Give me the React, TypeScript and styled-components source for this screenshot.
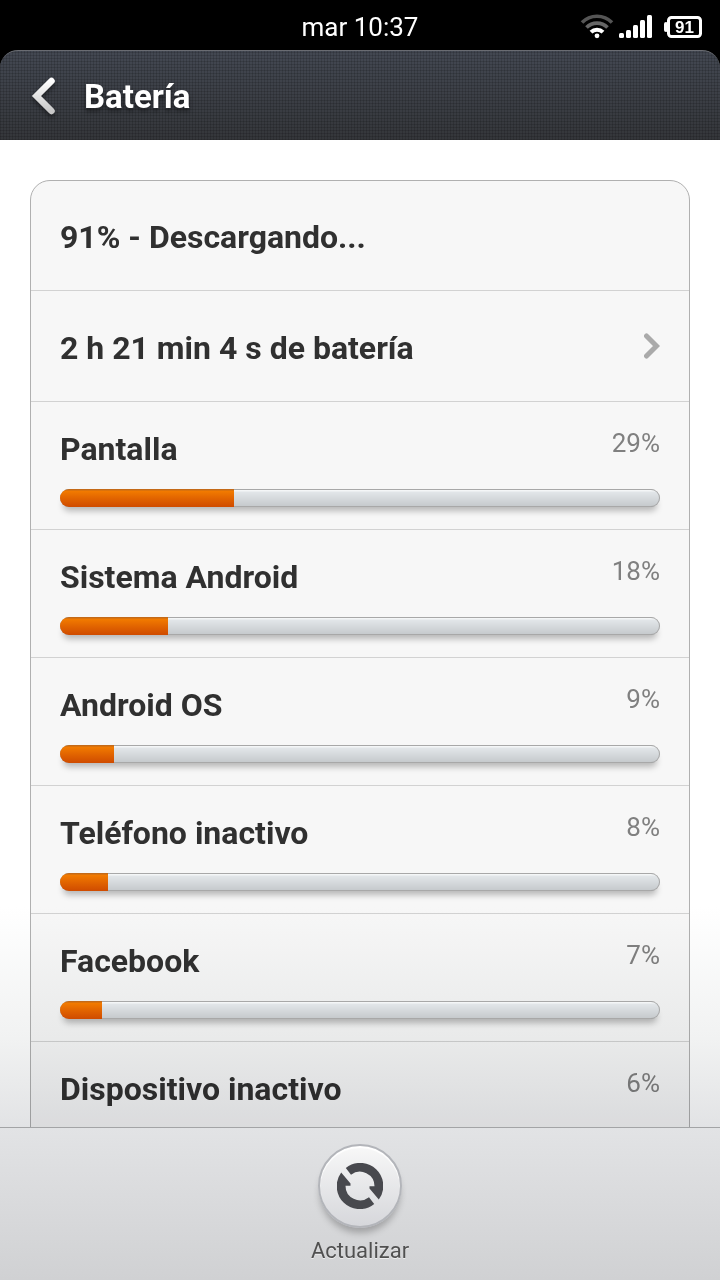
import React from "react";
import styled, { createGlobalStyle } from "styled-components";

const GlobalStyle = createGlobalStyle`
  *, *::before, *::after { box-sizing: border-box; }
  body {
    margin: 0;
    background: #000;
    font-family: Roboto, "Noto Sans", sans-serif;
    color: #303030;
  }
  h1, h2, p, ul { margin: 0; padding: 0; }
`;

const Screen = styled.div`
  display: flex;
  flex-direction: column;
  height: 100vh;
  overflow: hidden;
`;

const StatusBar = styled.div`
  display: grid;
  grid-template-columns: 1fr auto 1fr;
  align-items: center;
  flex: none;
  height: 50px;
  padding: 4px 16px 0;
  background: #000;
  color: #fff;
`;

const Clock = styled.time`
  grid-column: 2;
  font-size: 26px;
  line-height: 32px;
`;

const StatusIcons = styled.div`
  display: flex;
  justify-content: flex-end;
`;

const Header = styled.header`
  display: flex;
  align-items: center;
  flex: none;
  gap: 28px;
  height: 90px;
  padding: 2px 30px 0;
  border-top: 1px solid #6a6c72;
  border-radius: 18px 18px 0 0;
  background:
    repeating-linear-gradient(90deg, rgba(0, 0, 0, 0.14) 0 1px, transparent 1px 3px),
    repeating-linear-gradient(0deg, rgba(0, 0, 0, 0.14) 0 1px, transparent 1px 3px),
    linear-gradient(#434852, #34363a);
`;

const BackButton = styled.button`
  display: flex;
  padding: 0;
  border: 0;
  background: none;
  filter: drop-shadow(0 3px 2px rgba(0, 0, 0, 0.4));
`;

const Title = styled.h1`
  color: #fff;
  font-size: 33px;
  font-weight: 700;
  line-height: 40px;
  text-shadow: 0 3px 4px rgba(0, 0, 0, 0.5);
`;

const Content = styled.main`
  position: relative;
  flex: 1;
  min-height: 0;
  overflow: hidden;
  padding: 40px 30px 0;
  background: #fff;

  &::after {
    content: "";
    position: absolute;
    inset: auto 0 0;
    height: 220px;
    background: linear-gradient(#fff, #f1f2f2 60%, #e2e3e5);
    mix-blend-mode: multiply;
    pointer-events: none;
  }
`;

const Card = styled.div`
  border: 1px solid #b0b0b0;
  border-radius: 20px;
  background: #f7f7f7;
`;

const RowTitle = styled.h2`
  font-size: 32px;
  font-weight: 700;
  line-height: 42px;
`;

const SummaryRow = styled.div`
  display: flex;
  align-items: center;
  justify-content: space-between;
  height: 110px;
  padding: 2px 29px 0;
  border-bottom: 1px solid #d2d2d2;
`;

const DetailRow = styled.button`
  display: flex;
  align-items: center;
  justify-content: space-between;
  width: 100%;
  height: 111px;
  padding: 4px 29px 0;
  border: 0;
  border-bottom: 1px solid #d2d2d2;
  background: none;
  color: inherit;
  font: inherit;
  text-align: left;
`;

const UsageList = styled.ul`
  list-style: none;
`;

const UsageRow = styled.li`
  height: 128px;
  padding: 26px 29px 0;
  border-bottom: 1px solid #d2d2d2;

  &:last-child {
    border-bottom: 0;
  }
`;

const UsageHead = styled.div`
  display: flex;
  align-items: flex-start;
  justify-content: space-between;
  height: 61px;
`;

const Percent = styled.span`
  color: #808080;
  font-size: 26px;
  line-height: 30px;
`;

/* Sits above the fade at the foot of the list so the bars keep full colour. */
const TrackShadow = styled.div`
  position: relative;
  z-index: 1;
  border-radius: 9px;
  box-shadow: 0 7px 6px -3px rgba(0, 0, 0, 0.26);
`;

const Track = styled.div`
  height: 18px;
  overflow: hidden;
  border-radius: 9px;
  background: linear-gradient(#b0b0b0 0 1px, #f4f6f7 1px 2px, #e2e6e9 3px, #c6cacd 17px, #8e9092 17px);
  box-shadow: inset 0 0 0 1px #a8a8a8;
`;

const Fill = styled.div`
  height: 100%;
  background: linear-gradient(#c46a18 0 1px, #f27b00 2px, #e06200 10px, #cf4b00);
`;

const Toolbar = styled.footer`
  display: flex;
  justify-content: center;
  align-items: flex-start;
  flex: none;
  height: 153px;
  padding-top: 16px;
  border-top: 1px solid #a3a4a6;
  background: linear-gradient(#e2e3e5, #d0d1d3);
`;

const RefreshButton = styled.button`
  display: flex;
  flex-direction: column;
  align-items: center;
  gap: 9px;
  padding: 0;
  border: 0;
  background: none;
  color: #505050;
  font: inherit;
  font-size: 22px;
  line-height: 28px;
  text-shadow: 0 1px 0 rgba(255, 255, 255, 0.6);
`;

const Disc = styled.span`
  display: flex;
  align-items: center;
  justify-content: center;
  width: 84px;
  height: 84px;
  border: 2px solid #b3b5ba;
  border-radius: 50%;
  background: linear-gradient(#f8f8f8, #d6d7db);
  box-shadow: inset 0 2px 1px #fff, 0 7px 7px -2px rgba(0, 0, 0, 0.25);
`;

const usage = [
  { name: "Pantalla", percent: 29 },
  { name: "Sistema Android", percent: 18 },
  { name: "Android OS", percent: 9 },
  { name: "Teléfono inactivo", percent: 8 },
  { name: "Facebook", percent: 7 },
  { name: "Dispositivo inactivo", percent: 6 },
];

function StatusGlyphs() {
  return (
    <svg width="124" height="28" viewBox="580 13 124 28" fill="none" aria-hidden="true">
      <g strokeWidth="3.6">
        <path d="M582 22.500A21 21 0 0 1 612 22.500" stroke="#555" />
        <path d="M586.500 27.600A14.500 14.500 0 0 1 607.500 27.600" stroke="#666" />
        <path d="M591 32.200A8.500 8.500 0 0 1 603 32.200" stroke="#fff" strokeWidth="4" />
      </g>
      <circle cx="597" cy="35.800" r="2.400" fill="#fff" />
      <g fill="#fff">
        <rect x="619" y="33" width="5" height="5" rx="1.500" />
        <rect x="626" y="30" width="5" height="8" rx="1.500" />
        <rect x="633" y="25" width="5" height="13" rx="1.500" />
        <rect x="640" y="20" width="5" height="18" rx="1.500" />
        <rect x="647" y="15" width="5" height="23" rx="1.500" />
        <rect x="664" y="22" width="4" height="10" rx="2" />
      </g>
      <rect x="668.500" y="17.500" width="32" height="19" rx="3" stroke="#fff" strokeWidth="3" />
      <text x="684.500" y="33" fill="#fff" fontSize="17" fontWeight="700" textAnchor="middle" fontFamily="Liberation Sans, Arial, sans-serif">91</text>
    </svg>
  );
}

function BackIcon() {
  return (
    <svg width="26" height="40" viewBox="0 0 26 40" fill="none" aria-hidden="true">
      <defs>
        <linearGradient id="backTone" x1="0" y1="0" x2="0" y2="1">
          <stop offset="0" stopColor="#fff" />
          <stop offset="1" stopColor="#c8c8c8" />
        </linearGradient>
      </defs>
      <path d="M21.500 4L6.500 19L21.500 34" stroke="url(#backTone)" strokeWidth="6.500" strokeLinecap="round" />
    </svg>
  );
}

function ChevronIcon() {
  return (
    <svg width="16" height="30" viewBox="0 0 16 30" fill="none" aria-hidden="true">
      <path d="M2.500 3L12.500 13L2.500 23" stroke="#aaa" strokeWidth="5" strokeLinecap="round" />
    </svg>
  );
}

function RefreshIcon() {
  return (
    <svg width="46" height="46" viewBox="0 0 46 46" fill="#48494e" aria-hidden="true">
      <path d="M8.800 5A23 23 0 0 1 41.800 36.500L32.500 25.500V23.300H37.500A14.600 14.600 0 0 0 14 11.700Z" />
      <path d="M8.800 5A23 23 0 0 1 41.800 36.500L32.500 25.500V23.300H37.500A14.600 14.600 0 0 0 14 11.700Z" transform="rotate(180 23 23)" />
    </svg>
  );
}

export default function App() {
  return (
    <>
      <GlobalStyle />
      <Screen>
        <StatusBar>
          <Clock>mar 10:37</Clock>
          <StatusIcons>
            <StatusGlyphs />
          </StatusIcons>
        </StatusBar>
        <Header>
          <BackButton aria-label="Atrás">
            <BackIcon />
          </BackButton>
          <Title>Batería</Title>
        </Header>
        <Content>
          <Card>
            <SummaryRow>
              <RowTitle>91% - Descargando...</RowTitle>
            </SummaryRow>
            <DetailRow>
              <RowTitle as="span">2 h 21 min 4 s de batería</RowTitle>
              <ChevronIcon />
            </DetailRow>
            <UsageList>
              {usage.map(({ name, percent }) => (
                <UsageRow key={name}>
                  <UsageHead>
                    <RowTitle>{name}</RowTitle>
                    <Percent>{percent}%</Percent>
                  </UsageHead>
                  <TrackShadow>
                    <Track role="progressbar" aria-label={name} aria-valuenow={percent} aria-valuemin={0} aria-valuemax={100}>
                      <Fill style={{ width: `${percent}%` }} />
                    </Track>
                  </TrackShadow>
                </UsageRow>
              ))}
            </UsageList>
          </Card>
        </Content>
        <Toolbar>
          <RefreshButton>
            <Disc>
              <RefreshIcon />
            </Disc>
            Actualizar
          </RefreshButton>
        </Toolbar>
      </Screen>
    </>
  );
}
